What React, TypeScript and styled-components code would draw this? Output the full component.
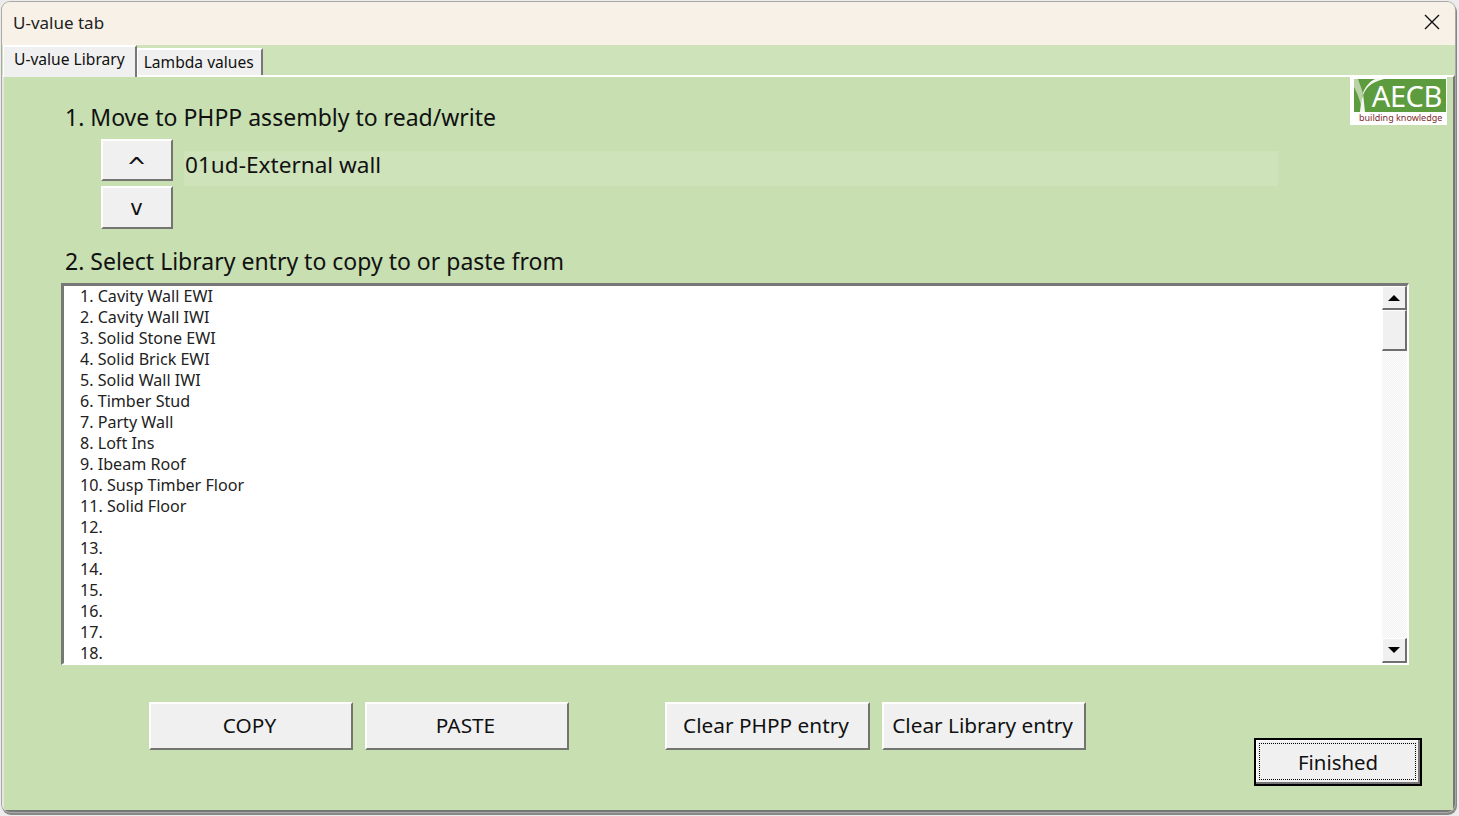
import { createGlobalStyle, styled } from "styled-components";

const GlobalStyle = createGlobalStyle`
  html, body {
    margin: 0;
    height: 100%;
    overflow: hidden;
    background: #ececec;
    font-family: "Noto Sans", "DejaVu Sans", sans-serif;
  }
  * { box-sizing: border-box; }
`;

const Desktop = styled.div`
  width: 1459px;
  height: 816px;
  padding: 2px 4px 4px 2px;
`;

const Window = styled.div`
  position: relative;
  width: 1453px;
  height: 810px;
  display: flex;
  flex-direction: column;
  border-radius: 8px;
  overflow: hidden;
  background: #c7dfb1;
  box-shadow: 0 0 0 1px #a9a9a6, 1px 2px 0 1px #888;
`;

const TitleBar = styled.div`
  height: 43px;
  flex-shrink: 0;
  display: flex;
  align-items: center;
  justify-content: space-between;
  padding: 0 15px 3px 11px;
  background: #f8f1e7;
  color: #222;
  font-size: 17px;
`;

const CloseIcon = styled.svg`
  width: 16px;
  height: 16px;
  stroke: #111;
  stroke-width: 1.4;
  fill: none;
`;

const TabStrip = styled.div`
  height: 30px;
  flex-shrink: 0;
  display: flex;
  align-items: flex-end;
  padding-left: 1px;
  background: #cfe3bb;
`;

const Tab = styled.div<{ $active?: boolean }>`
  height: ${(p) => (p.$active ? "32px" : "27px")};
  margin-bottom: ${(p) => (p.$active ? "-2px" : "0")};
  display: flex;
  align-items: center;
  padding: ${(p) => (p.$active ? "0 10px 7px 10px" : "0 7px 1px 6px")};
  background: #f0f0f0;
  border-top: 2px solid #fff;
  border-left: 1px solid #fff;
  border-right: 2px solid #777;
  color: #111;
  font-size: 15.6px;
  position: relative;
  z-index: 1;
`;

const TabPage = styled.div`
  position: relative;
  flex: 1;
  display: flex;
  flex-direction: column;
  padding: 0 0 0 60px;
  border-top: 2px solid #fff;
  border-left: 2px solid #e6e6e2;
  border-right: 2px solid #777;
  border-bottom: 2px solid #777;
  background: #c7dfb1;
`;

const Logo = styled.div`
  position: absolute;
  top: 0;
  right: 6px;
  width: 97px;
  height: 48px;
  display: flex;
  flex-direction: column;
  background: #fff;
  padding: 2px 0 0 4px;
`;

const LogoMark = styled.div`
  position: relative;
  height: 33px;
  width: 92px;
  flex-shrink: 0;
  background: #5c9c3e;
  color: #fff;
  font-size: 29px;
  line-height: 33px;
  text-align: right;
  padding-right: 4px;
  letter-spacing: -0.4px;
`;

const TreeIcon = styled.svg`
  position: absolute;
  left: 0;
  top: 0;
  width: 30px;
  height: 33px;
`;

const LogoCaption = styled.div`
  color: #7d2b2b;
  font-size: 9px;
  line-height: 12px;
  padding-left: 5px;
  white-space: nowrap;
`;

const Heading = styled.div<{ $gap: number }>`
  margin-top: ${(p) => p.$gap}px;
  height: 34px;
  line-height: 34px;
  color: #111;
  font-size: 23px;
  padding-left: 1px;
`;

const AssemblyRow = styled.div`
  display: grid;
  grid-template-columns: 71px 1094px;
  column-gap: 12px;
  margin: 5px 0 0 37px;
`;

const StepButtons = styled.div`
  display: flex;
  flex-direction: column;
  gap: 5px;
`;

const RaisedButton = styled.button<{ $width: number; $height: number }>`
  width: ${(p) => p.$width}px;
  height: ${(p) => p.$height}px;
  flex-shrink: 0;
  padding: 0 3px 2px 0;
  background: #f0f0f0;
  border-style: solid;
  border-width: 2px;
  border-color: #fff #747470 #747470 #fff;
  color: #111;
  font-family: inherit;
  font-size: 20.8px;
`;

const StepLabel = styled.span<{ $raise: number; $size: number }>`
  font-family: "DejaVu Sans", sans-serif;
  font-size: ${(p) => p.$size}px;
  position: relative;
  top: ${(p) => p.$raise}px;
  left: 1px;
`;

const AssemblyField = styled.div`
  height: 35px;
  margin-top: 12px;
  padding-left: 1px;
  background: #cfe3bb;
  color: #111;
  font-size: 22.6px;
  line-height: 28px;
`;

const ListBox = styled.div`
  width: 1348px;
  height: 382px;
  margin: 5px 0 0 -3px;
  display: flex;
  flex-shrink: 0;
  background: #fff;
  border-style: solid;
  border-width: 3px 2px 2px 3px;
  border-color: #777 #fff #fff #777;
`;

const ListRows = styled.div`
  flex: 1;
  height: 100%;
  overflow: hidden;
  padding: 1px 0 0 16px;
`;

const ListRow = styled.div`
  height: 21px;
  line-height: 19px;
  color: #222;
  font-size: 16.1px;
  white-space: nowrap;
`;

const ScrollBar = styled.div`
  width: 25px;
  height: 100%;
  display: flex;
  flex-direction: column;
  background: repeating-conic-gradient(#f0f0f0 0 25%, #fff 0 50%) 0 0 / 2px 2px;
`;

const ScrollButton = styled.div<{ $height: number }>`
  height: ${(p) => p.$height}px;
  flex-shrink: 0;
  display: flex;
  align-items: center;
  justify-content: center;
  background: #f0f0f0;
  border-style: solid;
  border-width: 1px 2px 2px 1px;
  border-color: #fff #6f6f6f #6f6f6f #fff;
`;

const ScrollSpacer = styled.div`
  flex: 1;
`;

const Arrow = styled.div<{ $down?: boolean }>`
  width: 0;
  height: 0;
  border-left: 6px solid transparent;
  border-right: 6px solid transparent;
  ${(p) => (p.$down ? "border-top: 6px solid #000;" : "border-bottom: 6px solid #000;")}
`;

const ActionRow = styled.div`
  display: flex;
  align-items: flex-start;
  margin: 37px 0 0 85px;
`;

const ActionButton = styled(RaisedButton)<{ $left: number }>`
  margin-left: ${(p) => p.$left}px;
`;

const FinishedButton = styled.button`
  width: 168px;
  height: 48px;
  flex-shrink: 0;
  margin: 36px 0 0 168px;
  padding: 0 0 1px;
  background: #f0f0f0;
  border: 2px solid #000;
  box-shadow: inset -2px -2px 0 #777, inset 1px 1px 0 #fff;
  color: #111;
  font-family: inherit;
  font-size: 20.4px;
  position: relative;
  &::after {
    content: "";
    position: absolute;
    inset: 3px 4px 4px 3px;
    border: 1px dotted #000;
  }
`;

const entries = [
  "1. Cavity Wall EWI",
  "2. Cavity Wall IWI",
  "3. Solid Stone EWI",
  "4. Solid Brick EWI",
  "5. Solid Wall IWI",
  "6. Timber Stud",
  "7. Party Wall",
  "8. Loft Ins",
  "9. Ibeam Roof",
  "10. Susp Timber Floor",
  "11. Solid Floor",
  "12.",
  "13.",
  "14.",
  "15.",
  "16.",
  "17.",
  "18.",
];

export default function App() {
  return (
    <Desktop>
      <GlobalStyle />
      <Window>
        <TitleBar>
          U-value tab
          <CloseIcon viewBox="0 0 16 16">
            <path d="M1 1 L15 15 M15 1 L1 15" />
          </CloseIcon>
        </TitleBar>
        <TabStrip>
          <Tab $active>U-value Library</Tab>
          <Tab>Lambda values</Tab>
        </TabStrip>
        <TabPage>
          <Logo>
            <LogoMark>
              <TreeIcon viewBox="0 0 30 33">
                <path d="M0 0 L4 0 C6 6 8 10 9 15 L7 26 C5 18 2 12 0 8 Z" fill="#b9d2a6" />
                <path d="M6 33 C7 24 8 14 14 8 C18 4 23 2 30 0 L21 0 C15 3 11 8 9 14 L11 33 Z" fill="#f4f7ef" />
              </TreeIcon>
              AECB
            </LogoMark>
            <LogoCaption>building knowledge</LogoCaption>
          </Logo>
          <Heading $gap={23}>1. Move to PHPP assembly to read/write</Heading>
          <AssemblyRow>
            <StepButtons>
              <RaisedButton $width={72} $height={42}>
                <StepLabel $size={24} $raise={8}>^</StepLabel>
              </RaisedButton>
              <RaisedButton $width={72} $height={43}>
                <StepLabel $size={21} $raise={0}>v</StepLabel>
              </RaisedButton>
            </StepButtons>
            <AssemblyField>01ud-External wall</AssemblyField>
          </AssemblyRow>
          <Heading $gap={15}>2. Select Library entry to copy to or paste from</Heading>
          <ListBox>
            <ListRows>
              {entries.map((entry) => (
                <ListRow key={entry}>{entry}</ListRow>
              ))}
            </ListRows>
            <ScrollBar>
              <ScrollButton $height={24}>
                <Arrow />
              </ScrollButton>
              <ScrollButton $height={41} />
              <ScrollSpacer />
              <ScrollButton $height={25}>
                <Arrow $down />
              </ScrollButton>
            </ScrollBar>
          </ListBox>
          <ActionRow>
            <ActionButton $left={0} $width={204} $height={48}>COPY</ActionButton>
            <ActionButton $left={12} $width={204} $height={48}>PASTE</ActionButton>
            <ActionButton $left={96} $width={205} $height={48}>Clear PHPP entry</ActionButton>
            <ActionButton $left={12} $width={204} $height={48}>Clear Library entry</ActionButton>
            <FinishedButton>Finished</FinishedButton>
          </ActionRow>
        </TabPage>
      </Window>
    </Desktop>
  );
}
